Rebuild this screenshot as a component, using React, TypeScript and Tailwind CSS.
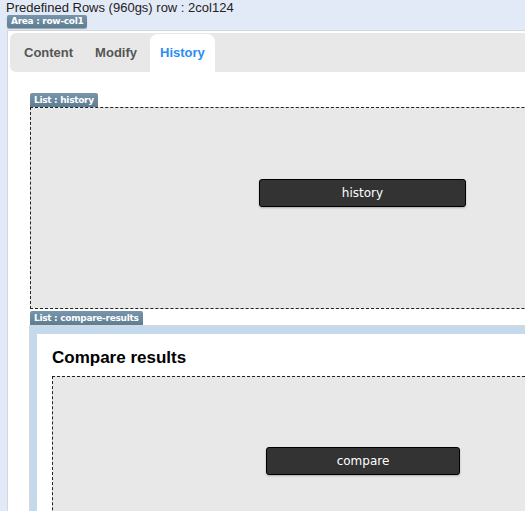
import React from 'react';

const Badge = ({ label }: { label: string }) => (
  <div className="flex h-[14px] w-fit items-center rounded-t-[2px] bg-gradient-to-b from-[#7896ab] to-[#5d7d93] px-[4px] text-[9px] font-bold leading-none text-white [font-family:'DejaVu_Sans',sans-serif] tracking-[-0.3px]">
    {label}
  </div>
);

const DarkButton = ({ label, width }: { label: string; width: string }) => (
  <div
    className={`${width} flex h-[28px] items-center justify-center rounded-[3px] border border-black bg-[#333333] text-[12px] text-white shadow-[0_1px_2px_rgba(0,0,0,0.25)] [font-family:'DejaVu_Sans',sans-serif]`}
  >
    {label}
  </div>
);

const App = () => {
  return (
    <div className="h-[511px] w-[525px] overflow-hidden bg-[#e3eaf7] [font-family:'Liberation_Sans',Arial,sans-serif]">
      <div className="w-[700px]">
        <div className="h-[30px] pl-[6px]">
          <div className="text-[13px] leading-[15px] text-[#222]">Predefined Rows (960gs) row : 2col124</div>
          <div className="ml-[1px] flex h-[13px] w-fit items-center rounded-[2px] bg-gradient-to-b from-[#7896ab] to-[#5d7d93] px-[4px] text-[9px] font-bold leading-none text-white shadow-[0_1px_1px_rgba(0,0,0,0.3)] [font-family:'DejaVu_Sans',sans-serif] tracking-[-0.3px]">
            Area : row-col1
          </div>
        </div>

        <div className="ml-[7px] h-[481px] border-l border-t border-[#d4d8de] bg-white">
          <div className="ml-[2px] mt-[2px] flex h-[39px] items-end rounded-l-[6px] bg-[#e8e8e8] pl-[14px] text-[13px] font-bold">
            <div className="flex h-[39px] items-center pr-[22px] text-[#555]">Content</div>
            <div className="flex h-[39px] items-center pr-[13px] text-[#555]">Modify</div>
            <div className="flex h-[38px] items-center rounded-t-[8px] bg-white px-[10px] text-[#2b8ef5]">History</div>
          </div>

          <div className="pl-[22px] pt-[21px]">
            <Badge label="List : history" />
            <div className="h-[202px] border border-dashed border-[#222] bg-[#e8e8e8] pl-[228px] pt-[71px]">
              <DarkButton label="history" width="w-[207px]" />
            </div>

            <div className="mt-[2px]">
              <Badge label="List : compare-results" />
            </div>
            <div className="-ml-[1px] border-l border-t border-[#d8d8d8]">
              <div className="border-l-[7px] border-t-[8px] border-[#c5d9ed] bg-white pl-[15px] pt-[14px]">
                <h2 className="text-[17px] font-bold leading-[20px] text-black">Compare results</h2>
                <div className="mt-[8px] h-[200px] border border-dashed border-[#222] bg-[#e8e8e8] pl-[213px] pt-[70px]">
                  <DarkButton label="compare" width="w-[194px]" />
                </div>
              </div>
            </div>
          </div>
        </div>
      </div>
    </div>
  );
};

export default App;
